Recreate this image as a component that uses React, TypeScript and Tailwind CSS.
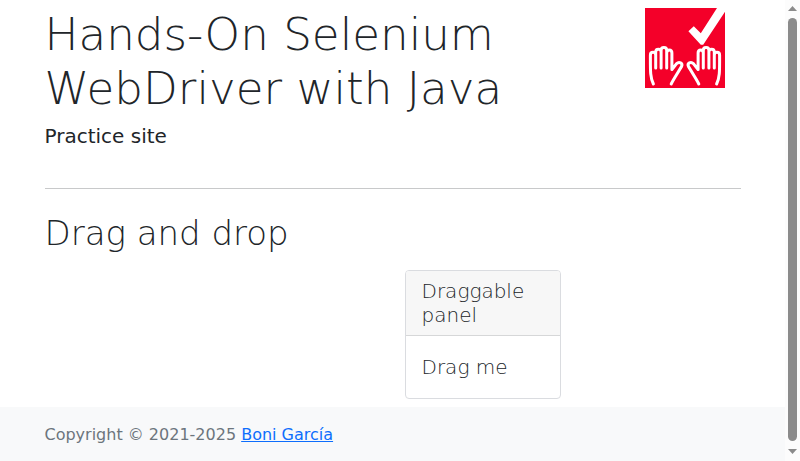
function Hand() {
  return (
    <path d="M8.4 76 C5 69 5.4 62 5.4 47 C5.4 43.4 10.7 43.4 10.7 47 V60 M10.7 47 V44 C10.7 40.3 16.1 40.3 16.1 44 V60 M16.1 44 V42.5 C16.1 38.6 21.7 38.6 21.7 42.5 V60 M21.7 45 C21.7 41 26.9 41 26.9 45 V61.5 L31.6 55.6 C34.2 53.2 38 55.2 36.6 58.4 L30 69.2 C28.4 72 27.2 74 26.2 76" />
  );
}

function Logo() {
  return (
    <svg className="block h-20 w-20" viewBox="0 0 80 80" role="img" aria-label="Logo">
      <rect width="80" height="80" fill="#f40029" />
      <path d="M80 0 V3.8 L58.2 36.8 H55.8 L43.4 23.2 L48.8 18.2 L55.8 25.2 L72 0 Z" fill="#fff" />
      <g fill="none" stroke="#fff" strokeWidth="3" strokeLinecap="round" strokeLinejoin="round">
        <Hand />
        <g transform="matrix(-1 0 0 1 80 0)">
          <Hand />
        </g>
      </g>
    </svg>
  );
}

function Scrollbar() {
  return (
    <div className="flex w-[15px] flex-col items-center bg-[#fcfcfc]" aria-hidden="true">
      <svg className="h-[18px] w-[15px] shrink-0" viewBox="0 0 15 18">
        <path d="M3 11 L7.5 6 L12 11 Z" fill="#8b8b8b" />
      </svg>
      <div className="h-[423px] w-[9px] shrink-0 rounded-full bg-[#8b8b8b]" />
      <svg className="h-5 w-[15px] shrink-0" viewBox="0 0 15 20">
        <path d="M3 8 L7.5 13 L12 8 Z" fill="#8b8b8b" />
      </svg>
    </div>
  );
}

export default function App() {
  return (
    <div className="flex h-[461px] w-[800px] overflow-hidden bg-white font-['DejaVu_Sans',sans-serif] text-[#212529]">
      <div className="flex w-[785px] flex-col">
        <main className="flex-1 px-[44.5px] pt-2">
          <header className="flex justify-between">
            <div>
              <h1 className="mb-2 text-[45.2px] leading-[1.2] font-light">
                Hands-On Selenium
                <br />
                WebDriver with Java
              </h1>
              <h5 className="text-xl leading-6 font-medium">Practice site</h5>
            </div>
            <div className="mr-4">
              <Logo />
            </div>
          </header>
          <hr className="mt-[39.5px] border-t border-[#c8c9ca]" />
          <h1 className="mt-6 text-[34px] leading-[1.2] font-light">Drag and drop</h1>
          <div className="mt-4 ml-[360px] w-[156px] rounded border border-[#dadce0] text-xl font-light">
            <div className="rounded-t-[3px] border-b border-[#d6d7d8] bg-[#f7f7f7] px-4 py-2 leading-6">
              Draggable panel
            </div>
            <div className="p-4 leading-[30px]">Drag me</div>
          </div>
        </main>
        <footer className="h-[54px] bg-[#f8f9fa] px-[44.5px] pt-4 text-base leading-6 text-[#6c757d]">
          Copyright © 2021-2025{" "}
          <a className="text-[#0d6efd] underline" href="#">
            Boni García
          </a>
        </footer>
      </div>
      <Scrollbar />
    </div>
  );
}
